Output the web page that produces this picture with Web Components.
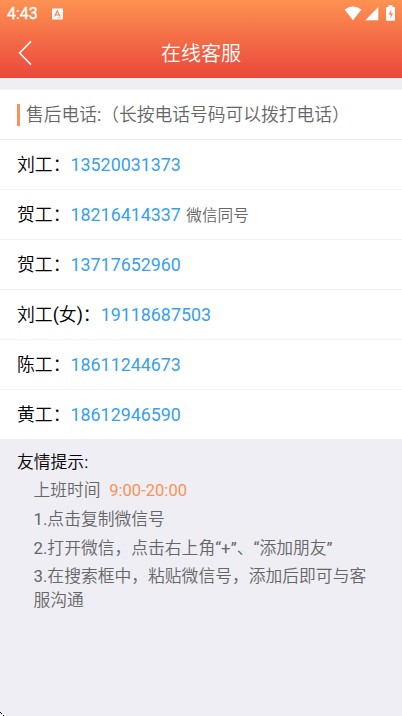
<!DOCTYPE html>
<html lang="zh-CN">
<head>
<meta charset="utf-8">
<title>在线客服</title>
<style>
html,body{margin:0;height:100%;overflow:hidden}
body{background:#efeef5;font-family:Roboto,"Noto Sans CJK SC",sans-serif;font-weight:350;color:#000}
</style>
</head>
<body>
<service-page></service-page>
<script>
function define(name, html) {
  const t = document.createElement('template');
  t.innerHTML = html;
  customElements.define(name, class extends HTMLElement {
    constructor() {
      super();
      this.attachShadow({mode: 'open'}).appendChild(t.content.cloneNode(true));
    }
  });
}

define('status-bar', `
<style>
:host{display:flex;align-items:center;height:28px;padding:0 5px 0 7px;color:#fff;font-size:16px;font-weight:400;-webkit-text-stroke:.3px #fff;line-height:28px}
svg{display:block}
.app{margin-left:14px}
.right{display:block;margin-left:auto}
</style>
<span>4:43</span>
<svg class="app" width="11" height="12" viewBox="0 0 11 12"><rect y=".5" width="11" height="11" rx="1" fill="#fff"/><path d="M2.6 8.6 5.3 2.8 8 8.6M3.6 6.9h3.4" fill="none" stroke="#f58a58" stroke-width="1.2"/><path d="M5.5 9.9h1M7.3 9.9h1.4" stroke="#f58a58"/></svg>
<svg class="right" width="53" height="18" viewBox="0 0 53 18" fill="#fff"><path d="M.6 4.2Q9 -1.8 17.4 4.2L9 15Z" transform="translate(0 .3)"/><path d="M34.3 2v13.3H21.3Z"/><path d="M45 2.2h1.5V.5h4v1.7H52q1 0 1 1V15q0 1-1 1h-7q-1 0-1-1V3.2q0-1 1-1Z" transform="translate(-2 -.3)"/><path d="M47.4 4.8 44.7 9.6h2l-.4 3.8 2.8-5h-2Z" fill="#f5824f"/></svg>`);

define('nav-bar', `
<style>
:host{display:grid;grid-template-columns:50px 1fr 50px;align-items:center;height:50px;color:#fff}
svg{display:block;margin-left:18px}
h1{margin:2px 0 0;font-size:20px;line-height:28px;font-weight:inherit;text-align:center}
</style>
<svg width="14" height="26" viewBox="0 0 14 26"><path d="M13 1.4 1.6 13 13 24.6" fill="none" stroke="#fff" stroke-width="1.5"/></svg>
<h1><slot></slot></h1>`);

define('section-title', `
<style>
:host{display:flex;align-items:center;height:49px;padding-left:17px;border-bottom:1px solid #e8e8eb;color:#666;font-size:17.75px;line-height:26px;white-space:nowrap}
i{width:3px;height:22px;margin-right:6px;background:#fc9153}
</style>
<i></i><span><slot></slot></span>`);

define('contact-row', `
<style>
:host{display:block;box-sizing:border-box;height:50px;padding-left:17px;border-bottom:1px solid #f2f2f4;font-size:17.85px;line-height:50px;white-space:nowrap}
:host(:last-child){border-bottom:0;height:49px}
.phone{color:#389ff0;font-weight:400}
.note{color:#666;font-size:15.6px;margin-left:5.5px}
</style>
<slot></slot><span class="phone"><slot name="phone"></slot></span><span class="note"><slot name="note"></slot></span>`);

define('tips-panel', `
<style>
:host{display:block;padding:11px 30px 0 17px;font-size:16.8px}
h2{margin:0;font-size:16.8px;line-height:24px;font-weight:inherit}
.list{display:flex;flex-direction:column;gap:4.2px;padding:4.2px 0 0 16.5px;color:#666;line-height:24px}
</style>
<h2><slot name="title"></slot></h2>
<div class="list"><slot></slot></div>`);

define('service-page', `
<style>
:host{display:block;position:relative;height:716px;background:#efeef5;overflow:hidden}
header{height:78px;background:linear-gradient(#fd9252,#eb473b)}
main{margin-top:11px;background:#fff;border-top:1px solid #f5f5f8}
.time{margin-left:8.5px;color:#fc9153;font-size:16.6px}
.time,.latin{font-weight:400}
.corner{position:absolute;left:0;bottom:0}
</style>
<header><status-bar></status-bar><nav-bar>在线客服</nav-bar></header>
<main>
<section-title>售后电话<span class="latin">:</span>（长按电话号码可以拨打电话）</section-title>
<div>
<contact-row>刘工：<span slot="phone">13520031373</span></contact-row>
<contact-row>贺工：<span slot="phone">18216414337</span><span slot="note">微信同号</span></contact-row>
<contact-row>贺工：<span slot="phone">13717652960</span></contact-row>
<contact-row>刘工<span class="latin">(</span>女<span class="latin">)</span>：<span slot="phone">19118687503</span></contact-row>
<contact-row>陈工：<span slot="phone">18611244673</span></contact-row>
<contact-row>黄工：<span slot="phone">18612946590</span></contact-row>
</div>
</main>
<tips-panel>
<span slot="title">友情提示<span class="latin">:</span></span>
<div>上班时间<span class="time">9:00-20:00</span></div>
<div><span class="latin">1.</span>点击复制微信号</div>
<div><span class="latin">2.</span>打开微信，点击右上角<span class="latin">“+”</span>、<span class="latin">“</span>添加朋友<span class="latin">”</span></div>
<div><span class="latin">3.</span><span>在搜索框中，粘贴微信号，添加后即可与客</span><br><span>服沟通</span></div>
</tips-panel>
<svg class="corner" width="5" height="5" viewBox="0 0 5 5"><path d="M0 1h1v1H0zM1 2h1v1H1zM3 4h1v1H3z"/><path d="M0 2h1v1H0zM2 3h1v1H2z" fill="#fff"/></svg>`);
</script>
</body>
</html>
